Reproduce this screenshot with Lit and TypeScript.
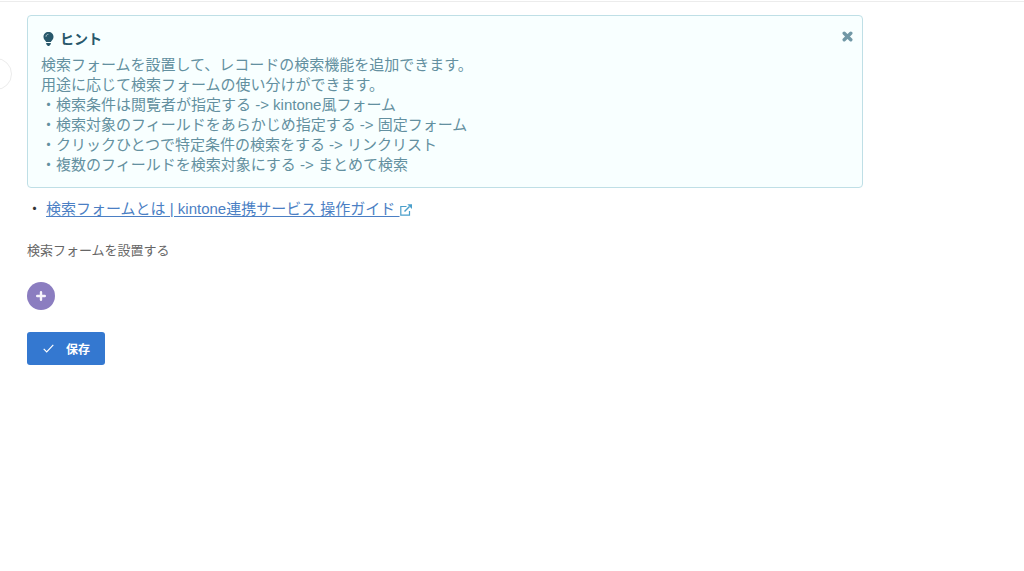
import { LitElement, html, css } from "lit";
import { customElement, state } from "lit/decorators.js";

const HINT_LINES = [
  "検索フォームを設置して、レコードの検索機能を追加できます。",
  "用途に応じて検索フォームの使い分けができます。",
  "・検索条件は閲覧者が指定する -> kintone風フォーム",
  "・検索対象のフィールドをあらかじめ指定する -> 固定フォーム",
  "・クリックひとつで特定条件の検索をする -> リンクリスト",
  "・複数のフィールドを検索対象にする -> まとめて検索",
];

@customElement("hint-box")
class HintBox extends LitElement {
  static styles = css`
    :host { display: block; }
    .box {
      display: flex;
      align-items: flex-start;
      justify-content: space-between;
      box-sizing: border-box;
      padding: 13px 8px 12px 13px;
      border: 1px solid #bfdfe6;
      border-radius: 4px;
      background: #f8ffff;
      color: #6390a0;
    }
    .title {
      display: flex;
      align-items: center;
      gap: 6px;
      margin: 0 0 6px;
      padding-left: 2px;
      font-size: 14px;
      line-height: 20px;
      font-weight: 700;
      color: #28586b;
    }
    .bulb { display: block; width: 11px; height: 14px; }
    .text { margin: 0; font-size: 15px; line-height: 20px; }
    .close {
      display: block;
      padding: 2px 1px;
      border: 0;
      background: none;
      color: #7198a6;
      cursor: pointer;
    }
    .close svg { display: block; width: 11px; height: 11px; }
  `;

  @state() private open = true;

  render() {
    if (!this.open) return null;
    return html`
      <section class="box">
        <div>
          <h2 class="title">
            <svg class="bulb" viewBox="0 0 11 14" aria-hidden="true">
              <path fill="currentColor" d="M5.500 0C2.500 0 .5 2.100.5 4.800c0 1.400.6 2.500 1.400 3.400.7.7 1 1.300 1.200 1.800h4.800c.2-.5.5-1.100 1.200-1.800.8-.9 1.400-2 1.400-3.400C10.500 2.100 8.500 0 5.500 0zM3.200 10.900h4.600v1.100L6.900 13.200 6 13.900H5l-.9-.7-.9-1.200z"/>
              <path fill="none" stroke="#f8ffff" stroke-width=".6" stroke-linecap="round" d="M3 4.400c0-1.200.8-2 2-2.100"/>
            </svg>
            ヒント
          </h2>
          <p class="text">${HINT_LINES.map((line, i) => html`${i ? html`<br />` : null}${line}`)}</p>
        </div>
        <button class="close" type="button" aria-label="閉じる" @click=${() => (this.open = false)}>
          <svg viewBox="0 0 11 11" aria-hidden="true">
            <path stroke="currentColor" stroke-width="3.4" stroke-linecap="round" d="M2.200 2.200l6.600 6.600M8.800 2.200L2.200 8.800"/>
          </svg>
        </button>
      </section>
    `;
  }
}

@customElement("app-root")
class AppRoot extends LitElement {
  static styles = css`
    :host {
      display: block;
      position: relative;
      overflow: hidden;
      min-height: 100vh;
      box-sizing: border-box;
      padding-top: 1px;
      background: #fff;
      font-family: "Liberation Sans", "Noto Sans CJK JP", sans-serif;
    }
    .handle {
      position: absolute;
      left: -20px;
      top: 58px;
      box-sizing: border-box;
      width: 32px;
      height: 32px;
      padding: 0;
      border: 1px solid #ececec;
      border-radius: 50%;
      background: #fff;
    }
    .content {
      display: flex;
      flex-direction: column;
      align-items: flex-start;
      padding: 13px 27px;
      border-top: 1px solid #ececec;
    }
    .hint { width: 86.2%; }
    .links {
      margin: 11px 0 0;
      padding: 0;
      list-style: none;
      font-size: 15px;
      line-height: 20px;
    }
    .item { display: flex; gap: 4px; color: #333; }
    .link { color: #4b7fc4; text-decoration: underline; text-underline-offset: 2px; }
    .external { width: 12px; height: 12px; vertical-align: -2px; color: #4a9fcb; }
    .label { margin: 22px 0 0; font-size: 13px; line-height: 20px; color: #666; }
    .add {
      display: grid;
      place-items: center;
      width: 28px;
      height: 28px;
      margin-top: 21px;
      padding: 0;
      border: 0;
      border-radius: 50%;
      background: #8b7dc0;
      color: #f6f4fb;
      cursor: pointer;
    }
    .add svg { display: block; width: 10px; height: 10px; }
    .save {
      display: flex;
      align-items: center;
      gap: 12px;
      height: 33px;
      margin-top: 22px;
      padding: 0 15px 0 16px;
      border: 0;
      border-radius: 3px;
      background: #3478d0;
      color: #fff;
      font-family: inherit;
      font-size: 12px;
      font-weight: 700;
      cursor: pointer;
    }
    .save svg { display: block; width: 11px; height: 9px; }
  `;

  render() {
    return html`
      <main class="content">
        <hint-box class="hint"></hint-box>
        <ul class="links">
          <li class="item">
            <span>・</span>
            <a class="link" href="#guide">検索フォームとは | kintone連携サービス 操作ガイド
              <svg class="external" viewBox="0 0 12 12" fill="none" stroke="currentColor" aria-hidden="true">
                <path stroke-width="1.200" d="M6.500 2.500H.8v8.700h8.700V7"/>
                <path stroke-width="1.500" d="M4.500 7.500l5-5"/>
                <path fill="currentColor" stroke="none" d="M7.300.3H12V5z"/>
              </svg></a>
          </li>
        </ul>
        <p class="label">検索フォームを設置する</p>
        <button class="add" type="button" aria-label="追加">
          <svg viewBox="0 0 10 10" aria-hidden="true">
            <path stroke="currentColor" stroke-width="2.400" stroke-linecap="round" d="M5 1.200v7.600M1.200 5h7.600"/>
          </svg>
        </button>
        <button class="save" type="button">
          <svg viewBox="0 0 11 9" fill="none" aria-hidden="true">
            <path stroke="currentColor" stroke-width="1.200" d="M.7 4.800l3 3L10.300.9"/>
          </svg>
          保存
        </button>
      </main>
      <button class="handle" type="button" aria-label="メニュー"></button>
    `;
  }
}
